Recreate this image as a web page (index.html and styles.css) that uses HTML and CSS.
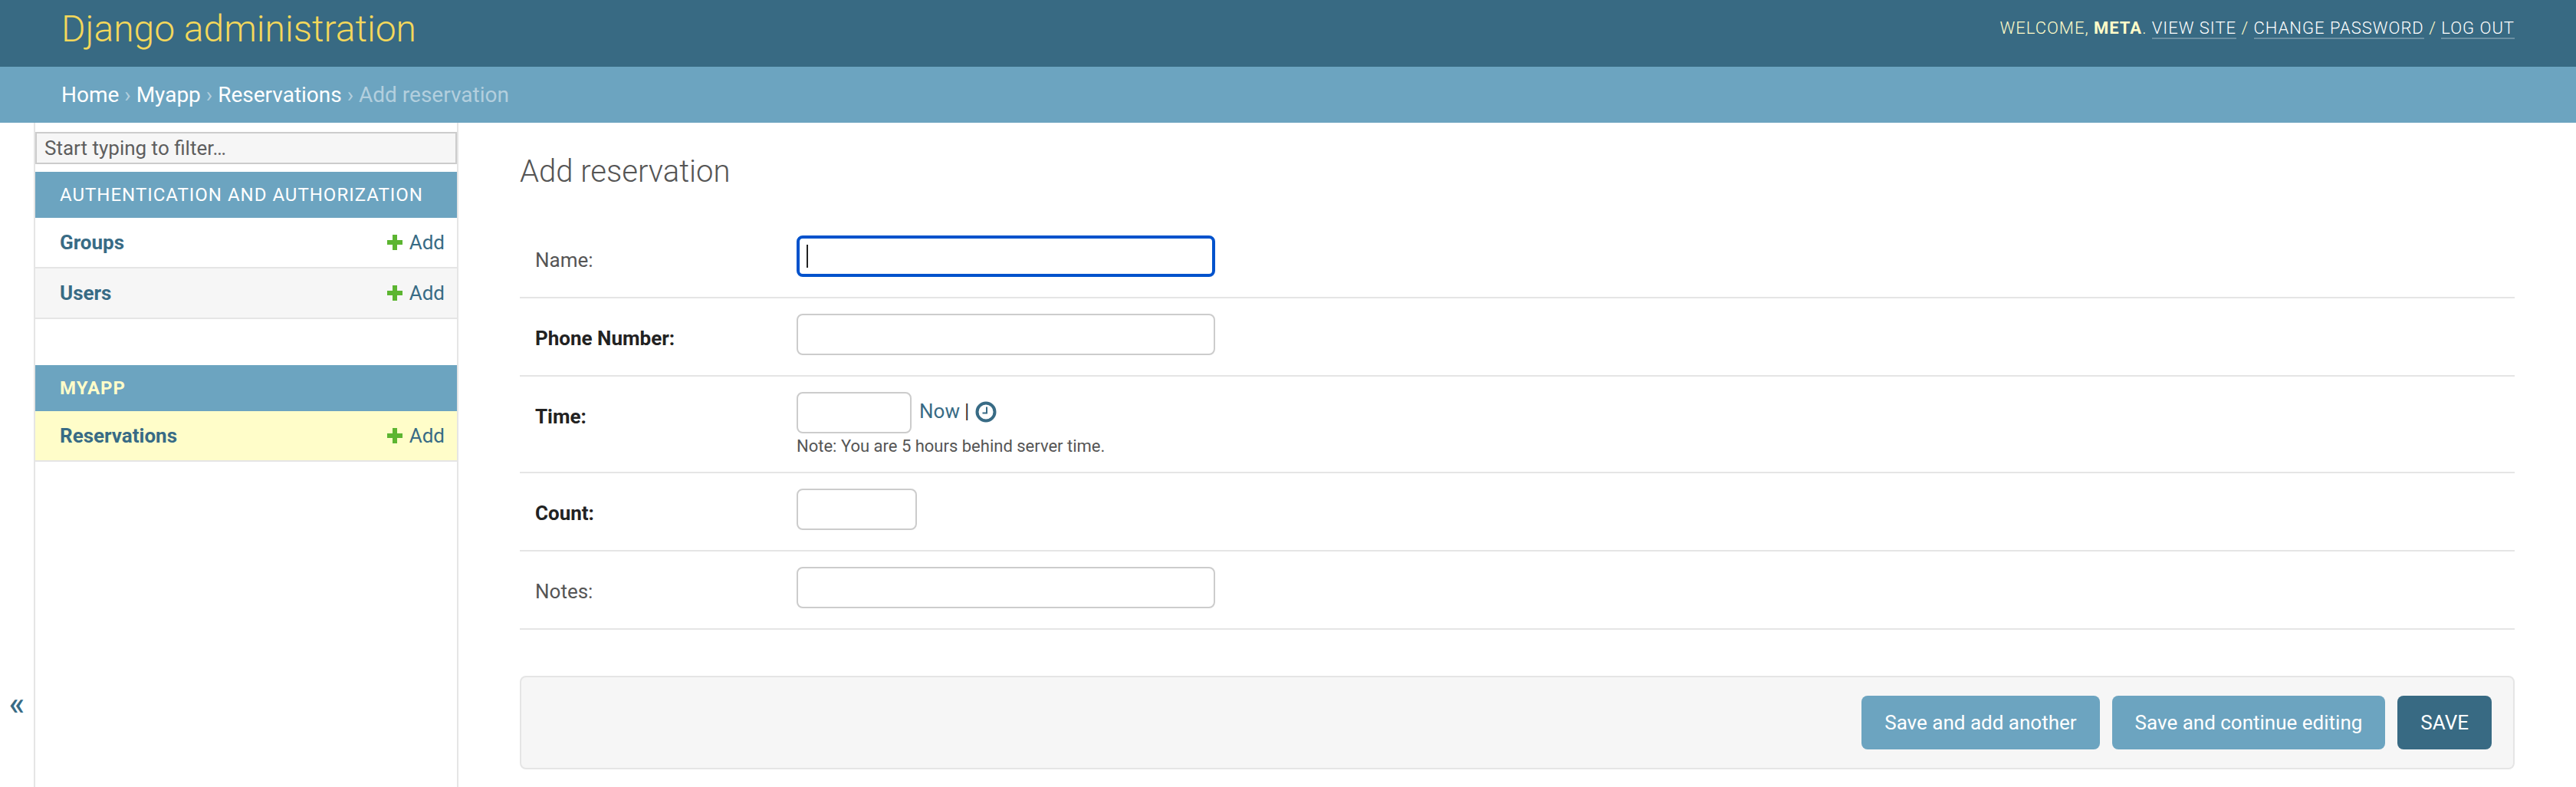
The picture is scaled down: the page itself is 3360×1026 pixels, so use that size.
FILE: index.html
```html
<!DOCTYPE html>
<html lang="en">
<head>
<meta charset="utf-8">
<title>Add reservation | Django site admin</title>
<link rel="stylesheet" href="styles.css">
</head>
<body>
<header class="header">
  <h1 class="brand">Django administration</h1>
  <div class="user-tools">Welcome, <strong>meta</strong>. <a href="#">View site</a> / <a href="#">Change password</a> / <a href="#">Log out</a></div>
</header>
<nav class="breadcrumbs"><a href="#">Home</a> › <a href="#">Myapp</a> › <a href="#">Reservations</a> › Add reservation</nav>
<main class="main">
  <button class="toggle" type="button">«</button>
  <aside class="sidebar">
    <input class="filter" type="search" placeholder="Start typing to filter…">
    <section class="app">
      <h2 class="caption">Authentication and Authorization</h2>
      <div class="model"><a class="model-name" href="#">Groups</a><a class="add" href="#"><svg class="plus" viewBox="0 0 20 20"><path d="M7 0h6v7h7v6h-7v7H7v-7H0V7h7z"/></svg>Add</a></div>
      <div class="model alt"><a class="model-name" href="#">Users</a><a class="add" href="#"><svg class="plus" viewBox="0 0 20 20"><path d="M7 0h6v7h7v6h-7v7H7v-7H0V7h7z"/></svg>Add</a></div>
    </section>
    <section class="app">
      <h2 class="caption current">Myapp</h2>
      <div class="model selected"><a class="model-name" href="#">Reservations</a><a class="add" href="#"><svg class="plus" viewBox="0 0 20 20"><path d="M7 0h6v7h7v6h-7v7H7v-7H0V7h7z"/></svg>Add</a></div>
    </section>
  </aside>
  <div class="content">
    <h1 class="title">Add reservation</h1>
    <form class="form">
      <div class="row">
        <label class="label">Name:</label>
        <div class="field"><input class="input wide focused" type="text"><span class="caret"></span></div>
      </div>
      <div class="row">
        <label class="label required">Phone Number:</label>
        <div class="field"><input class="input wide" type="text"></div>
      </div>
      <div class="row row-time">
        <label class="label required">Time:</label>
        <div class="field">
          <div class="time-line">
            <input class="input time" type="text">
            <a class="now" href="#">Now</a><span class="sep">|</span>
            <svg class="clock" viewBox="0 0 28 28"><circle cx="14" cy="14" r="11.5" fill="none" stroke="#386b85" stroke-width="4"/><path d="M15 7.5v8H9.5" fill="none" stroke="#386b85" stroke-width="2"/></svg>
          </div>
          <p class="help">Note: You are 5 hours behind server time.</p>
        </div>
      </div>
      <div class="row">
        <label class="label required">Count:</label>
        <div class="field"><input class="input count" type="text"></div>
      </div>
      <div class="row">
        <label class="label">Notes:</label>
        <div class="field"><input class="input wide" type="text"></div>
      </div>
      <div class="submit-row">
        <button class="btn" type="button">Save and add another</button>
        <button class="btn" type="button">Save and continue editing</button>
        <button class="btn default" type="button">SAVE</button>
      </div>
    </form>
  </div>
</main>
</body>
</html>
```
FILE: styles.css
```css
* { box-sizing: border-box; }
html, body { height: 100%; margin: 0; overflow: hidden; }
body {
  display: flex;
  flex-direction: column;
  font-family: Roboto, "Liberation Sans", sans-serif;
  font-size: 28px;
  color: #333;
  background: #fff;
}
a { color: #386b85; text-decoration: none; }

.header {
  flex: none;
  height: 87px;
  display: flex;
  justify-content: space-between;
  padding: 0 80px;
  background: #386a83;
  color: #fffcc9;
}
.brand {
  margin: 10px 0 0;
  font-size: 48px;
  line-height: 56px;
  font-weight: 300;
  color: #f4d85b;
}
.user-tools {
  padding-top: 24px;
  font-size: 22px;
  line-height: 26px;
  font-weight: 300;
  letter-spacing: 1px;
  text-transform: uppercase;
}
.user-tools strong { font-weight: 700; }
.user-tools a {
  color: #fff;
  border-bottom: 2px solid rgba(255, 255, 255, 0.25);
}

.breadcrumbs {
  flex: none;
  height: 73px;
  padding: 20px 80px 0;
  background: #6ca4c0;
  color: #b3cfde;
  font-size: 28px;
  line-height: 33px;
  font-weight: 400;
}
.breadcrumbs a { color: #fff; }

.main { flex: 1; display: flex; min-height: 0; }

.toggle {
  flex: none;
  width: 46px;
  padding: 650px 0 0;
  border: 0;
  border-right: 2px solid #e5e5e5;
  background: #fff;
  color: #386b85;
  font-family: inherit;
  font-size: 42px;
  font-weight: 500;
  line-height: 40px;
  display: block;
  text-align: center;
  align-self: stretch;
}

.sidebar {
  flex: none;
  width: 552px;
  padding-top: 12px;
  border-right: 2px solid #e5e5e5;
}
.filter {
  display: block;
  width: 100%;
  height: 42px;
  margin-bottom: 10px;
  padding: 0 10px;
  border: 2px solid #ccc;
  border-radius: 0;
  outline: 0;
  background: #f6f6f6;
  font-family: inherit;
  font-size: 26px;
  color: #333;
  -webkit-appearance: none;
  appearance: none;
}
.filter::placeholder { color: #5e5e5e; opacity: 1; }

.app { margin-bottom: 60px; }
.caption {
  margin: 0;
  height: 60px;
  padding: 0 32px;
  background: #6ca4c0;
  color: #fff;
  font-size: 24px;
  line-height: 60px;
  font-weight: 400;
  letter-spacing: 1px;
  text-transform: uppercase;
  white-space: nowrap;
}
.caption.current { color: #fffcc9; font-weight: 700; }

.model {
  height: 66px;
  display: flex;
  justify-content: space-between;
  align-items: center;
  padding: 0 16px 0 32px;
  border-bottom: 2px solid #e5e5e5;
  font-size: 26px;
}
.model.alt { background: #f6f6f6; }
.model.selected { background: #fffdc9; }
.model-name { font-weight: 700; }
.add { display: flex; align-items: center; }
.plus { width: 20px; height: 20px; margin-right: 9px; fill: #5cb531; }

.content { flex: 1; min-width: 0; padding: 39px 80px 0; }
.title {
  margin: 0 0 38px;
  font-size: 40px;
  line-height: 50px;
  font-weight: 300;
  color: #555;
}

.row {
  display: flex;
  padding: 20px 0 24px 20px;
  border-bottom: 2px solid #e5e5e5;
  height: 102px;
}
.row-time { height: 126px; }
.label {
  flex: none;
  width: 341px;
  padding-top: 16px;
  font-size: 26px;
  line-height: 32px;
  color: #555;
}
.label.required { font-weight: 700; color: #222; }
.field { position: relative; }
.input {
  display: block;
  height: 54px;
  padding: 0 12px;
  border: 2px solid #ccc;
  border-radius: 8px;
  outline: 0;
  background: #fff;
}
.input.wide { width: 546px; }
.input.time { width: 150px; }
.input.count { width: 157px; }
.input.focused { border: 4px solid #0052cc; }
.caret {
  position: absolute;
  left: 13px;
  top: 12px;
  width: 2px;
  height: 30px;
  background: #222;
}
.time-line { display: flex; align-items: center; }
.now { margin-left: 10px; font-size: 26px; line-height: 32px; margin-top: -4px; }
.sep { margin-left: 6px; font-size: 26px; line-height: 32px; margin-top: -4px; color: #333; }
.clock { width: 28px; height: 28px; margin-left: 8px; margin-top: -2px; }
.help {
  margin: 4px 0 0;
  font-size: 22px;
  line-height: 26px;
  color: #555;
}

.submit-row {
  display: flex;
  justify-content: flex-end;
  gap: 16px;
  margin-top: 60px;
  height: 122px;
  padding: 24px 28px 0 0;
  border: 2px solid #e5e5e5;
  border-radius: 8px;
  background: #f6f6f6;
}
.btn {
  height: 70px;
  padding: 0 30px;
  border: 0;
  border-radius: 8px;
  background: #6ca4c0;
  color: #fff;
  font-family: inherit;
  font-size: 26px;
  font-weight: 400;
}
.btn.default { background: #386a83; }
```
